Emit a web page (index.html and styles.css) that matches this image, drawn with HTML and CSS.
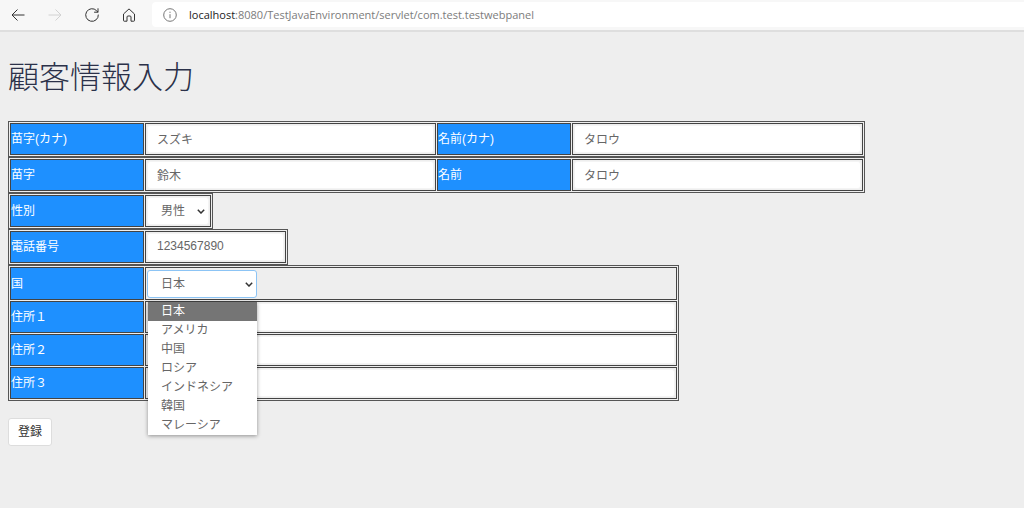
FILE: index.html
```html
<!DOCTYPE html>
<html lang="ja">
<head>
<meta charset="utf-8">
<title>顧客情報入力</title>
<link rel="stylesheet" href="styles.css">
</head>
<body>
<header class="toolbar">
  <nav class="nav">
    <button class="nav-button" type="button" aria-label="戻る"><svg viewBox="0 0 16 16"><path d="M14.5 8H2M7.5 2.5 2 8l5.500 5.500"/></svg></button>
    <button class="nav-button" type="button" aria-label="進む" disabled><svg viewBox="0 0 16 16"><path d="M1.500 8H14M8.500 2.500 14 8l-5.500 5.500"/></svg></button>
    <button class="nav-button" type="button" aria-label="更新"><svg viewBox="0 0 16 16"><path d="M14.300 7.600A6.300 6.300 0 1 1 12.600 3.700L14 5.200M14 1.300V5.200H10.100"/></svg></button>
    <button class="nav-button" type="button" aria-label="ホーム"><svg viewBox="0 0 16 16"><path d="M2.500 7 8 1.900 13.500 7v6.500a.7.7 0 0 1-.7.7H10V10a1 1 0 0 0-1-1H7a1 1 0 0 0-1 1v4.200H3.200a.7.7 0 0 1-.7-.7Z"/></svg></button>
  </nav>
  <div class="address">
    <svg class="info" viewBox="0 0 14 14"><circle cx="7" cy="7" r="6.300"/><path d="M7 6.200v4M7 3.700v1.200"/></svg>
    <span class="url"><span class="host">localhost</span>:8080/TestJavaEnvironment/servlet/com.test.testwebpanel</span>
  </div>
</header>
<main class="page">
  <h1 class="title">顧客情報入力</h1>
  <form class="form">
    <table class="group">
      <tr>
        <th class="label"><label for="last-kana">苗字(カナ)</label></th>
        <td class="cell cell-name"><input class="field" id="last-kana" type="text" value="スズキ"></td>
        <th class="label"><label for="first-kana">名前(カナ)</label></th>
        <td class="cell cell-name"><input class="field" id="first-kana" type="text" value="タロウ"></td>
      </tr>
    </table>
    <table class="group">
      <tr>
        <th class="label"><label for="last">苗字</label></th>
        <td class="cell cell-name"><input class="field" id="last" type="text" value="鈴木"></td>
        <th class="label"><label for="first">名前</label></th>
        <td class="cell cell-name"><input class="field" id="first" type="text" value="タロウ"></td>
      </tr>
    </table>
    <table class="group">
      <tr>
        <th class="label"><label for="gender">性別</label></th>
        <td class="cell cell-gender">
          <div class="select">
            <select class="field choice" id="gender"><option>男性</option><option>女性</option></select>
            <svg class="chevron" viewBox="0 0 8 5"><path d="M.8.8 4 4 7.200.8"/></svg>
          </div>
        </td>
      </tr>
    </table>
    <table class="group">
      <tr>
        <th class="label"><label for="phone">電話番号</label></th>
        <td class="cell cell-phone"><input class="field" id="phone" type="tel" value="1234567890"></td>
      </tr>
    </table>
    <table class="group">
      <tr>
        <th class="label label-country"><label for="country">国</label></th>
        <td class="cell cell-address">
          <div class="select select-open">
            <select class="field choice" id="country"><option>日本</option></select>
            <svg class="chevron" viewBox="0 0 8 5"><path d="M.8.8 4 4 7.200.8"/></svg>
            <ul class="menu" role="listbox" aria-label="国">
              <li class="option selected" role="option" aria-selected="true">日本</li>
              <li class="option" role="option">アメリカ</li>
              <li class="option" role="option">中国</li>
              <li class="option" role="option">ロシア</li>
              <li class="option" role="option">インドネシア</li>
              <li class="option" role="option">韓国</li>
              <li class="option" role="option">マレーシア</li>
            </ul>
          </div>
        </td>
      </tr>
      <tr>
        <th class="label"><label for="address1">住所１</label></th>
        <td class="cell cell-address"><input class="field" id="address1" type="text"></td>
      </tr>
      <tr>
        <th class="label"><label for="address2">住所２</label></th>
        <td class="cell cell-address"><input class="field" id="address2" type="text"></td>
      </tr>
      <tr>
        <th class="label"><label for="address3">住所３</label></th>
        <td class="cell cell-address"><input class="field" id="address3" type="text"></td>
      </tr>
    </table>
    <button class="submit" type="button">登録</button>
  </form>
</main>
</body>
</html>
```
FILE: styles.css
```css
* {
  box-sizing: border-box;
}

body {
  margin: 0;
  background: #eee;
  color: #666;
  font: 12px/18px "Liberation Sans", "Noto Sans CJK JP", sans-serif;
}

.toolbar {
  display: flex;
  gap: 15px;
  height: 32px;
  padding: 2px 0 3px 10px;
  border-bottom: 2px solid #dedede;
  background: #f7f7f7;
}

.nav {
  display: flex;
  align-items: center;
  gap: 21px;
}

.nav-button {
  display: flex;
  width: 16px;
  height: 16px;
  padding: 0;
  border: 0;
  background: none;
  color: #333;
}

.nav-button:disabled {
  color: #d2d2d2;
}

svg {
  fill: none;
  stroke: currentColor;
}

.nav-button svg {
  width: 16px;
  height: 16px;
}

.address {
  display: flex;
  flex: 1;
  align-items: center;
  gap: 12px;
  padding-left: 11px;
  border-radius: 4px 0 0 4px;
  background: #fff;
}

.info {
  width: 14px;
  height: 14px;
  color: #777;
}

.url {
  color: #7c7c7c;
  font: 11px/18px "Open Sans", sans-serif;
}

.host {
  color: #222;
}

.page {
  padding: 21px 8px;
}

.title {
  margin: 0 0 24px;
  color: #2b3149;
  font: 300 31px/44px "Noto Sans CJK JP", sans-serif;
}

.group {
  border: 1px solid #555;
  border-spacing: 1px;
}

.label,
.cell {
  height: 32px;
  border: 1px solid #444;
}

.label {
  width: 134px;
  padding: 0;
  background: #1e90ff;
  color: #fff;
  font-weight: 400;
  text-align: left;
}

.label-country {
  height: 33px;
}

.cell {
  padding: 1px;
}

.cell-name {
  width: 291px;
}

.cell-gender {
  width: 66px;
}

.cell-phone {
  width: 141px;
}

.cell-address {
  width: 532px;
}

.field {
  display: block;
  width: 100%;
  height: 28px;
  padding: 0 9px 2px;
  border: 1px solid #f4f4f4;
  border-radius: 3px;
  background: #fff;
  color: #666;
  font: inherit;
}

.select {
  position: relative;
}

.select-open {
  width: 110px;
}

.choice {
  padding: 0 13px;
  appearance: none;
}

.select-open .choice {
  border-color: #8cc4f5;
}

.chevron {
  position: absolute;
  top: 12px;
  right: 4px;
  width: 8px;
  height: 5px;
  color: #333;
  stroke-width: 1.5;
  pointer-events: none;
}

.menu {
  position: absolute;
  z-index: 1;
  top: 32px;
  left: 1px;
  width: 109px;
  margin: 0;
  padding: 0;
  background: #fff;
  box-shadow: 0 1px 4px #0006;
  list-style: none;
}

.option {
  padding: 0 13px;
  line-height: 19px;
}

.selected {
  background: #757575;
  color: #fff;
}

.submit {
  display: block;
  height: 28px;
  margin-top: 17px;
  padding: 0 9px;
  border: 1px solid #ddd;
  border-radius: 3px;
  background: #fff;
  color: #333;
  font: inherit;
}
```
